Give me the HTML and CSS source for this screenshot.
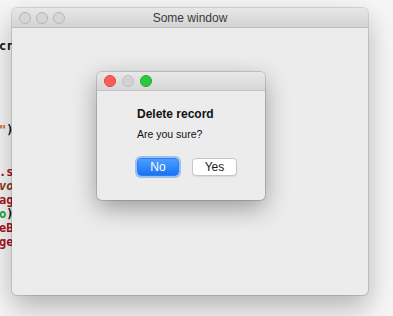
FILE: index.html
```html
<!DOCTYPE html>
<html lang="en">
<head>
    <meta charset="UTF-8">
    <meta name="viewport" content="width=device-width, initial-scale=1.0">
    <title>Some window</title>
    <link rel="stylesheet" href="styles.css">
</head>
<body>
    <!-- Редактор за окном -->
    <div class="editor">
        <div class="code-line"><span class="c-plain">cri</span></div>
        <div class="code-line"></div>
        <div class="code-line"></div>
        <div class="code-line"></div>
        <div class="code-line"></div>
        <div class="code-line"></div>
        <div class="code-line"><span class="c-str">"</span><span class="c-plain">)</span></div>
        <div class="code-line"></div>
        <div class="code-line"></div>
        <div class="code-line"><span class="c-red">.s</span></div>
        <div class="code-line"><span class="c-kw">vo</span></div>
        <div class="code-line"><span class="c-red">ag</span></div>
        <div class="code-line"><span class="c-green">o</span><span class="c-plain">)</span></div>
        <div class="code-line"><span class="c-red">eB</span></div>
        <div class="code-line"><span class="c-red">gel</span></div>
    </div>

    <!-- Основное окно -->
    <div class="window">
        <div class="titlebar">
            <div class="lights">
                <span class="light off"></span>
                <span class="light off"></span>
                <span class="light off"></span>
            </div>
            <div class="title">Some window</div>
        </div>
        <div class="window-body"></div>
    </div>

    <!-- Диалог -->
    <div class="dialog">
        <div class="dialog-bar">
            <span class="light red"></span>
            <span class="light gray"></span>
            <span class="light green"></span>
        </div>
        <div class="dialog-body">
            <h2>Delete record</h2>
            <p>Are you sure?</p>
            <div class="buttons">
                <button class="btn btn-primary">No</button>
                <button class="btn">Yes</button>
            </div>
        </div>
    </div>
</body>
</html>
```

FILE: styles.css
```css
/* Общие стили */
body {
    margin: 0;
    width: 393px;
    height: 316px;
    overflow: hidden;
    position: relative;
    background: #f6f6f6;
    font-family: "Liberation Sans", Arial, sans-serif;
    color: #1d1d1d;
}

/* Код на заднем плане */
.editor {
    position: absolute;
    left: -1px;
    top: 39px;
    width: 60px;
    font-family: "DejaVu Sans Mono", monospace;
    font-size: 12px;
    line-height: 14px;
    font-weight: bold;
}

.code-line {
    height: 14px;
    white-space: pre;
}
.c-plain { color: #111; }
.c-str { color: #c4641b; }
.c-red { color: #a3151d; }
.c-kw { color: #8b3a1a; font-style: italic; }
.c-green { color: #19a33a; }

/* Основное окно */
.window {
    position: absolute;
    left: 12px;
    top: 8px;
    width: 356px;
    height: 287px;
    display: flex;
    flex-direction: column;
    border-radius: 5px;
    background: #ececec;
    box-shadow: 0 0 0 1px rgba(0, 0, 0, 0.12), 0 12px 28px rgba(0, 0, 0, 0.28);
    overflow: hidden;
}

.titlebar {
    position: relative;
    height: 19px;
    flex-shrink: 0;
    display: flex;
    align-items: center;
    background: linear-gradient(#e7e7e7, #d3d3d3);
    border-bottom: 1px solid #bdbdbd;
}

.lights {
    display: flex;
    gap: 5px;
    padding-left: 7px;
}

.title {
    position: absolute;
    left: 0;
    right: 0;
    top: 3px;
    text-align: center;
    font-size: 12px;
    color: #3a3a3a;
}

.window-body {
    flex: 1;
}

/* Светофор */
.light {
    width: 10px;
    height: 10px;
    border-radius: 50%;
    display: inline-block;
}

.light.off {
    width: 12px;
    height: 12px;
    box-sizing: border-box;
    background: #d6d6d6;
    border: 1px solid #b5b5b5;
}

.light.red { background: #fc5f57; border: 1px solid #e0443e; }
.light.gray { background: #d3d3d3; border: 1px solid #c0c0c0; }
.light.green { background: #2bc840; border: 1px solid #1faa31; }

/* Диалог */
.dialog {
    position: absolute;
    left: 97px;
    top: 72px;
    width: 168px;
    height: 128px;
    border-radius: 5px;
    background: #ececec;
    overflow: hidden;
    box-shadow: 0 0 0 1px rgba(0, 0, 0, 0.14), 0 8px 24px rgba(0, 0, 0, 0.35);
}

.dialog-bar {
    height: 18px;
    display: flex;
    align-items: center;
    gap: 6px;
    padding-left: 7px;
    background: linear-gradient(#e8e8e8, #d7d7d7);
    border-bottom: 1px solid #c4c4c4;
}

.dialog-body {
    padding: 16px 0 0 40px;
}

.dialog-body h2 {
    margin: 0;
    font-size: 12px;
    line-height: 15px;
    font-weight: bold;
    color: #111;
}

.dialog-body p {
    margin: 6px 0 0;
    font-size: 10.5px;
    line-height: 13px;
    color: #111;
}

.buttons {
    display: flex;
    gap: 13px;
    margin-top: 17px;
}

/* Кнопки */
.btn {
    height: 18px;
    padding: 0;
    width: 45px;
    font-family: "Liberation Sans", Arial, sans-serif;
    font-size: 12px;
    line-height: 16px;
    color: #1a1a1a;
    background: #ffffff;
    border: 1px solid #c6c6c6;
    border-radius: 4px;
    box-shadow: 0 1px 1px rgba(0, 0, 0, 0.08);
}

.btn-primary {
    width: 42px;
    color: #ffffff;
    background: linear-gradient(#4aa0ff, #1a72f5);
    border-color: #2f7de8;
    box-shadow: 0 0 0 2px rgba(90, 155, 250, 0.55);
}
```
